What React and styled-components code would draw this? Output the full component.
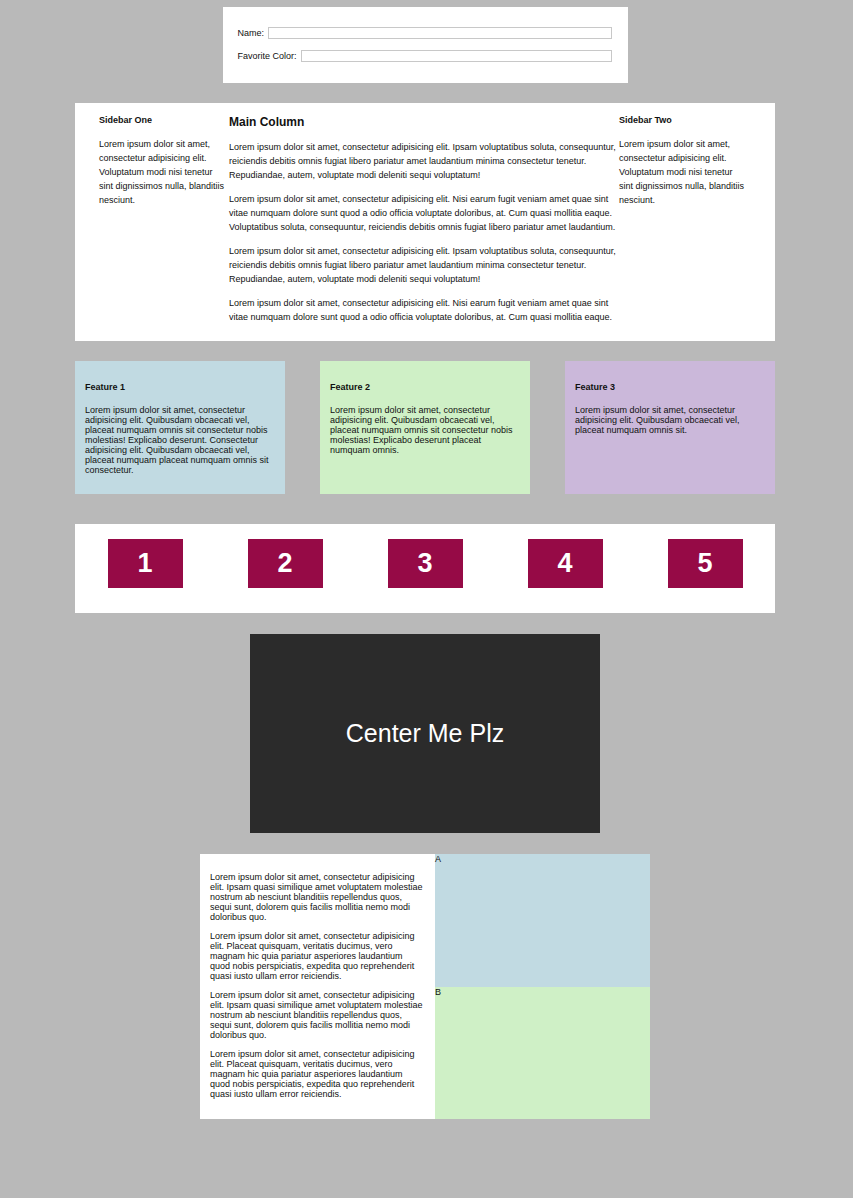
import React from "react";
import styled, { createGlobalStyle } from "styled-components";

const GlobalStyle = createGlobalStyle`
    html, body {
        margin: 0;
        padding: 0;
        background: #b9b9b9;
        font-family: "Liberation Sans", Arial, sans-serif;
        color: #111;
    }
`;

const LOREM_A =
    "Lorem ipsum dolor sit amet, consectetur adipisicing elit. Ipsam voluptatibus soluta, consequuntur, reiciendis debitis omnis fugiat libero pariatur amet laudantium minima consectetur tenetur. Repudiandae, autem, voluptate modi deleniti sequi voluptatum!";
const LOREM_B =
    "Lorem ipsum dolor sit amet, consectetur adipisicing elit. Nisi earum fugit veniam amet quae sint vitae numquam dolore sunt quod a odio officia voluptate doloribus, at. Cum quasi mollitia eaque. Voluptatibus soluta, consequuntur, reiciendis debitis omnis fugiat libero pariatur amet laudantium.";
const LOREM_C =
    "Lorem ipsum dolor sit amet, consectetur adipisicing elit. Nisi earum fugit veniam amet quae sint vitae numquam dolore sunt quod a odio officia voluptate doloribus, at. Cum quasi mollitia eaque.";
const SIDE =
    "Lorem ipsum dolor sit amet, consectetur adipisicing elit. Voluptatum modi nisi tenetur sint dignissimos nulla, blanditiis nesciunt.";
const SPLIT_A =
    "Lorem ipsum dolor sit amet, consectetur adipisicing elit. Ipsam quasi similique amet voluptatem molestiae nostrum ab nesciunt blanditiis repellendus quos, sequi sunt, dolorem quis facilis mollitia nemo modi doloribus quo.";
const SPLIT_B =
    "Lorem ipsum dolor sit amet, consectetur adipisicing elit. Placeat quisquam, veritatis ducimus, vero magnam hic quia pariatur asperiores laudantium quod nobis perspiciatis, expedita quo reprehenderit quasi iusto ullam error reiciendis.";

const features = [
    {
        title: "Feature 1",
        color: "#c1dae2",
        text: "Lorem ipsum dolor sit amet, consectetur adipisicing elit. Quibusdam obcaecati vel, placeat numquam omnis sit consectetur nobis molestias! Explicabo deserunt. Consectetur adipisicing elit. Quibusdam obcaecati vel, placeat numquam placeat numquam omnis sit consectetur.",
    },
    {
        title: "Feature 2",
        color: "#cff0c6",
        text: "Lorem ipsum dolor sit amet, consectetur adipisicing elit. Quibusdam obcaecati vel, placeat numquam omnis sit consectetur nobis molestias! Explicabo deserunt placeat numquam omnis.",
    },
    {
        title: "Feature 3",
        color: "#cbb8da",
        text: "Lorem ipsum dolor sit amet, consectetur adipisicing elit. Quibusdam obcaecati vel, placeat numquam omnis sit.",
    },
];

function App() {
    return (
        <>
            <GlobalStyle />
            <Page>
                <FormBox>
                    <FormRow>
                        <Label>Name:</Label>
                        <Input type="text" />
                    </FormRow>
                    <FormRow>
                        <Label>Favorite Color:</Label>
                        <Input type="text" />
                    </FormRow>
                </FormBox>

                <ColumnsBox>
                    <Sidebar>
                        <SideTitle>Sidebar One</SideTitle>
                        <SideText>{SIDE}</SideText>
                    </Sidebar>
                    <MainColumn>
                        <MainTitle>Main Column</MainTitle>
                        <MainText>{LOREM_A}</MainText>
                        <MainText>{LOREM_B}</MainText>
                        <MainText>{LOREM_A}</MainText>
                        <MainText>{LOREM_C}</MainText>
                    </MainColumn>
                    <Sidebar>
                        <SideTitle>Sidebar Two</SideTitle>
                        <SideText>{SIDE}</SideText>
                    </Sidebar>
                </ColumnsBox>

                <FeatureRow>
                    {features.map((f) => (
                        <FeatureCard key={f.title} $bg={f.color}>
                            <FeatureTitle>{f.title}</FeatureTitle>
                            <FeatureText>{f.text}</FeatureText>
                        </FeatureCard>
                    ))}
                </FeatureRow>

                <NumberBar>
                    {[1, 2, 3, 4, 5].map((n) => (
                        <NumberCell key={n}>
                            <NumberBox>{n}</NumberBox>
                        </NumberCell>
                    ))}
                </NumberBar>

                <CenterBox>Center Me Plz</CenterBox>

                <SplitBox>
                    <SplitText>
                        <SplitPara>{SPLIT_A}</SplitPara>
                        <SplitPara>{SPLIT_B}</SplitPara>
                        <SplitPara>{SPLIT_A}</SplitPara>
                        <SplitPara>{SPLIT_B}</SplitPara>
                    </SplitText>
                    <SplitPanes>
                        <Pane $bg="#c1dae2">A</Pane>
                        <Pane $bg="#cff0c6">B</Pane>
                    </SplitPanes>
                </SplitBox>
            </Page>
        </>
    );
}

const Page = styled.div`
    display: flex;
    flex-direction: column;
    align-items: center;
    padding: 7px 3px 60px 0;
`;

const FormBox = styled.form`
    width: 405px;
    box-sizing: border-box;
    background: #fff;
    padding: 20px 16px 21px 15px;
    display: flex;
    flex-direction: column;
    gap: 11px;
`;
const FormRow = styled.div`
    display: flex;
    align-items: center;
    gap: 4px;
`;
const Label = styled.label`
    font-size: 9px;
    line-height: 12px;
    white-space: nowrap;
`;
const Input = styled.input`
    flex: 1;
    height: 12px;
    box-sizing: border-box;
    border: 1px solid #c8c8c8;
    padding: 0;
    margin: 0;
    background: #fff;
`;

const ColumnsBox = styled.section`
    margin-top: 20px;
    width: 700px;
    box-sizing: border-box;
    background: #fff;
    padding: 0 25px 7px 24px;
    display: grid;
    grid-template-columns: 130px 390px 130px;
`;
const Sidebar = styled.div`
    font-size: 9px;
`;
const SideTitle = styled.h3`
    font-size: 9px;
    font-weight: bold;
    margin: 12px 0 12px;
`;
const SideText = styled.p`
    margin: 0;
    width: 127px;
    line-height: 14px;
`;
const MainColumn = styled.div`
    font-size: 9px;
`;
const MainTitle = styled.h2`
    font-size: 12px;
    font-weight: bold;
    margin: 12px 0 11px;
`;
const MainText = styled.p`
    margin: 0 0 10px;
    line-height: 14px;
`;

const FeatureRow = styled.section`
    margin-top: 20px;
    width: 700px;
    display: flex;
    justify-content: space-between;
`;
const FeatureCard = styled.div`
    width: 210px;
    height: 133px;
    box-sizing: border-box;
    background: ${(p) => p.$bg};
    padding: 21px 10px 10px;
`;
const FeatureTitle = styled.h4`
    font-size: 9px;
    font-weight: bold;
    margin: 0 0 13px;
`;
const FeatureText = styled.p`
    font-size: 9px;
    margin: 0;
`;

const NumberBar = styled.section`
    margin-top: 30px;
    width: 700px;
    height: 89px;
    box-sizing: border-box;
    background: #fff;
    padding-top: 15px;
    display: grid;
    grid-template-columns: repeat(5, 1fr);
`;
const NumberCell = styled.div`
    display: flex;
    justify-content: center;
    align-items: flex-start;
`;
const NumberBox = styled.div`
    width: 75px;
    height: 49px;
    background: #960a46;
    color: #fff;
    font-size: 27px;
    font-weight: bold;
    display: flex;
    align-items: center;
    justify-content: center;
`;

const CenterBox = styled.div`
    margin-top: 21px;
    width: 350px;
    height: 199px;
    background: #2b2b2b;
    color: #fff;
    font-size: 25px;
    display: flex;
    align-items: center;
    justify-content: center;
`;

const SplitBox = styled.section`
    margin-top: 21px;
    width: 450px;
    height: 265px;
    background: #fff;
    display: flex;
`;
const SplitText = styled.div`
    width: 235px;
    box-sizing: border-box;
    padding: 18px 10px 10px;
    font-size: 9px;
`;
const SplitPara = styled.p`
    margin: 0 0 9px;
`;
const SplitPanes = styled.div`
    flex: 1;
    display: flex;
    flex-direction: column;
`;
const Pane = styled.div`
    flex: 1;
    background: ${(p) => p.$bg};
    font-size: 9px;
`;

export default App;
